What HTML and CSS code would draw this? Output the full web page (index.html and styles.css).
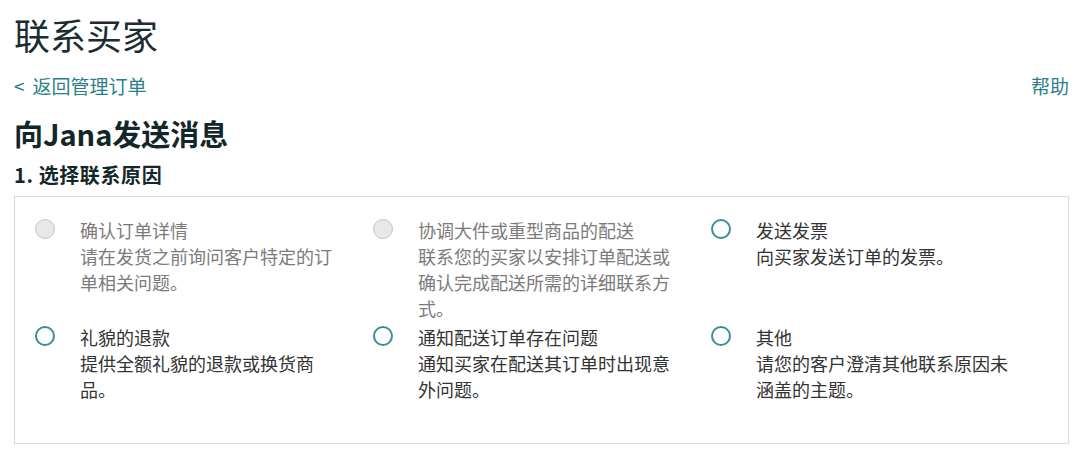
FILE: index.html
```html
<!DOCTYPE html>
<html lang="zh-CN">
<head>
<meta charset="utf-8">
<title>联系买家</title>
<link rel="stylesheet" href="styles.css">
</head>
<body>
  <h1 class="page-title">联系买家</h1>
  <div class="nav-row">
    <a class="link" href="#"><span class="chev">&lt;</span>返回管理订单</a>
    <a class="link" href="#">帮助</a>
  </div>
  <h2 class="msg-title">向Jana发送消息</h2>
  <h3 class="step-title">1. 选择联系原因</h3>
  <div class="reasons">
    <div class="option disabled">
      <span class="radio"></span>
      <div class="opt-text">
        <div class="opt-title">确认订单详情</div>
        <div class="opt-desc">请在发货之前询问客户特定的订单相关问题。</div>
      </div>
    </div>
    <div class="option disabled">
      <span class="radio"></span>
      <div class="opt-text">
        <div class="opt-title">协调大件或重型商品的配送</div>
        <div class="opt-desc">联系您的买家以安排订单配送或确认完成配送所需的详细联系方式。</div>
      </div>
    </div>
    <div class="option">
      <span class="radio"></span>
      <div class="opt-text">
        <div class="opt-title">发送发票</div>
        <div class="opt-desc">向买家发送订单的发票。</div>
      </div>
    </div>
    <div class="option">
      <span class="radio"></span>
      <div class="opt-text">
        <div class="opt-title">礼貌的退款</div>
        <div class="opt-desc">提供全额礼貌的退款或换货商品。</div>
      </div>
    </div>
    <div class="option">
      <span class="radio"></span>
      <div class="opt-text">
        <div class="opt-title">通知配送订单存在问题</div>
        <div class="opt-desc">通知买家在配送其订单时出现意外问题。</div>
      </div>
    </div>
    <div class="option">
      <span class="radio"></span>
      <div class="opt-text">
        <div class="opt-title">其他</div>
        <div class="opt-desc">请您的客户澄清其他联系原因未涵盖的主题。</div>
      </div>
    </div>
  </div>
</body>
</html>
```

FILE: styles.css
```css
html, body {
  margin: 0;
  background: #ffffff;
}
body {
  padding: 13px 11px 0 14px;
  font-family: "Noto Sans CJK SC", "Noto Sans", sans-serif;
  color: #16282b;
}
.page-title {
  margin: 0;
  font-size: 36px;
  line-height: 42px;
  font-weight: 400;
  color: #1b2d30;
}
.nav-row {
  margin-top: 19px;
  display: flex;
  justify-content: space-between;
  font-size: 19px;
  line-height: 24px;
}
.link {
  color: #2b7f8b;
  text-decoration: none;
}
.chev {
  margin-right: 8px;
}
.msg-title {
  margin: 16px 0 0;
  font-size: 29px;
  line-height: 38px;
  font-weight: 700;
  color: #13272a;
}
.step-title {
  margin: 10px 0 0;
  font-size: 20px;
  line-height: 26px;
  font-weight: 700;
  letter-spacing: 0.6px;
  color: #13272a;
}
.reasons {
  margin-top: 8px;
  border: 1px solid #d9d9d9;
  padding: 20px 20px 41px;
  display: grid;
  grid-template-columns: repeat(3, 338px);
  row-gap: 3px;
  align-items: start;
}
.option {
  display: flex;
  gap: 25px;
}
.radio {
  flex: none;
  box-sizing: border-box;
  width: 20px;
  height: 20px;
  margin-top: 2px;
  border-radius: 50%;
  border: 2px solid #3a8e97;
  background: #fff;
}
.option.disabled .radio {
  border: 1px solid #c4c4c4;
  background: #e8e8e8;
}
.opt-text {
  width: 262px;
  font-size: 18px;
  line-height: 26px;
  color: #333333;
}
.option.disabled .opt-text {
  color: #7b7b7b;
}
```
